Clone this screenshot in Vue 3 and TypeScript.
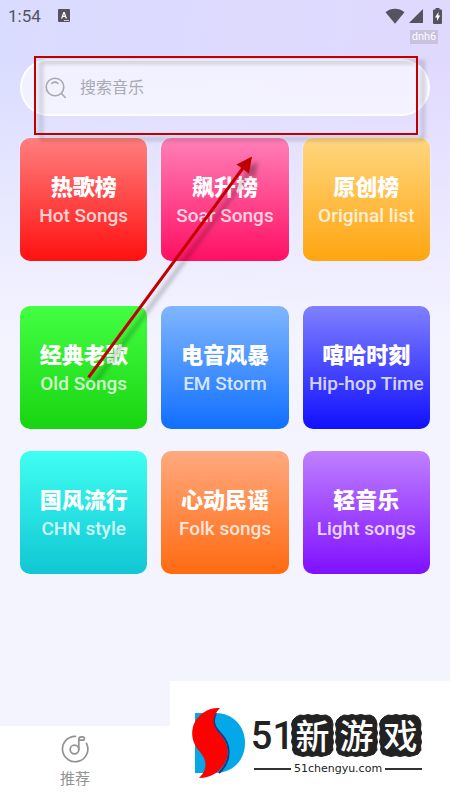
<script setup lang="ts">
import { ref } from 'vue'

interface Category {
  title: string
  subtitle: string
  tone: string
}

const keyword = ref('')

const charts: Category[] = [
  { title: '热歌榜', subtitle: 'Hot Songs', tone: 'red' },
  { title: '飙升榜', subtitle: 'Soar Songs', tone: 'pink' },
  { title: '原创榜', subtitle: 'Original list', tone: 'amber' },
]

const genres: Category[] = [
  { title: '经典老歌', subtitle: 'Old Songs', tone: 'green' },
  { title: '电音风暴', subtitle: 'EM Storm', tone: 'blue' },
  { title: '嘻哈时刻', subtitle: 'Hip-hop Time', tone: 'indigo' },
  { title: '国风流行', subtitle: 'CHN style', tone: 'cyan' },
  { title: '心动民谣', subtitle: 'Folk songs', tone: 'orange' },
  { title: '轻音乐', subtitle: 'Light songs', tone: 'purple' },
]

const sections: Category[][] = [charts, genres]
const brandTiles: string[] = ['新', '游', '戏']
</script>

<template>
  <div class="screen">
    <header class="status">
      <span class="clock">1:54</span>
      <svg class="notice" viewBox="0 0 12 13" aria-hidden="true">
        <rect width="12" height="13" rx="1" fill="#55535f" />
        <path d="M3 9.5 5.3 3h1.4L9 9.500H7.600L7.100 8H4.900L4.400 9.500ZM5.300 6.800h1.400L6 4.700Z" fill="#fff" fill-rule="evenodd" />
        <path d="M6 11.500h5" stroke="#c9c8dc" stroke-width="1" />
      </svg>
      <span class="indicators" aria-hidden="true">
        <svg width="20" height="16" viewBox="0 0 20 16">
          <path d="M.5 4.200C6-.3 14-.3 19.500 4.200L10 15.700Z" fill="#55535f" />
        </svg>
        <svg width="14" height="14" viewBox="0 0 14 14">
          <path d="M14 0V14H0Z" fill="#55535f" />
        </svg>
        <svg class="battery" width="9" height="16" viewBox="0 0 9 16">
          <path d="M2.500 0h4v1.500H8q1 0 1 1V15q0 1-1 1H1q-1 0-1-1V2.500q0-1 1-1h1.500Z" fill="#55535f" />
          <path d="M5.500 4 2 9.500h2V13l3.200-5.500H5.300Z" fill="#fff" />
        </svg>
      </span>
    </header>
    <div class="tagline"><span class="tag">dnh6</span></div>

    <main class="content">
      <form class="search" role="search" @submit.prevent>
        <label for="keyword" aria-label="搜索音乐">
          <svg width="22" height="22" viewBox="0 0 22 22" fill="none" stroke="#a8a7b3" stroke-width="1.600" stroke-linecap="round">
            <circle cx="10" cy="10" r="8.800" />
            <path d="M16.500 16.500 20.300 20.500M6.800 6.300Q9.800 3.800 13 6.300" />
          </svg>
        </label>
        <input id="keyword" v-model="keyword" type="text" placeholder="搜索音乐" />
      </form>

      <section v-for="(items, i) in sections" :key="i" class="grid">
        <a v-for="item in items" :key="item.title" href="#" class="card" :class="item.tone">
          <span class="title">{{ item.title }}</span>
          <span class="subtitle">{{ item.subtitle }}</span>
        </a>
      </section>
    </main>

    <nav class="tabs">
      <a href="#" class="tab">
        <svg width="28" height="28" viewBox="0 0 28 28" fill="none" stroke="#929292" stroke-width="1.700" stroke-linecap="round">
          <path d="M14.500 1.300A12.700 12.700 0 1 0 25.500 8.300" />
          <circle cx="13.500" cy="14.500" r="4.300" />
          <path d="M17.800 14.500V4.500Q17.800 1.800 20.500 1.800h1q2 0 2 1.700t-2 1.700h-3.700" />
        </svg>
        <span>推荐</span>
      </a>
    </nav>

    <aside class="brand">
      <svg class="mark" width="54" height="72" viewBox="0 0 54 72" aria-hidden="true">
        <path d="M3 6H23C41 6 53 19 53 36S41 66 23 66H3Z" fill="#04a8e8" />
        <path d="M24 6C20 14 22 20 29 27C39 37 40 54 27 66" fill="none" stroke="#07418e" stroke-width="2" />
        <path d="M28 1C18 0 6 6 1.500 18C-2 30 2 38 8 45C15 53 16 62 7 71C22 71 32 61 35 51C37 41 34 34 28 27C20 19 19 10 28 1Z" fill="#fe0000" />
      </svg>
      <div class="wordmark">
        <div class="name">
          <span class="number">51</span>
          <span v-for="tile in brandTiles" :key="tile" class="tile">
            <svg viewBox="0 0 43 43" aria-hidden="true">
              <path d="M5 3 9 1 13 1.500 17 .5 21 1.500 26 .5 30 1.500 35 1 39 3 41 6 42 10 41.500 15 42.500 19 41.500 23 42.500 28 41.500 32 42 36 39 40 35 41.500 30 42.500 26 41.500 21 42.500 17 41.500 12 42.500 8 41.500 3.500 40 1.500 36 2 32 .5 28 1.500 23 .5 19 1.500 15 .5 10 2 6Z" fill="#222" stroke="#222" stroke-width="1" stroke-linejoin="round" />
            </svg>
            <span class="glyph">{{ tile }}</span>
          </span>
        </div>
        <div class="site">51chengyu.com</div>
      </div>
    </aside>

    <svg class="markup" width="450" height="400" viewBox="0 0 450 400" aria-hidden="true">
      <g class="ink">
        <rect x="35" y="57" width="382" height="77" fill="none" stroke="#c00000" stroke-width="2" />
        <path d="M88.500 377.500 243 168" stroke="#c00000" stroke-width="3" />
        <path d="M252 156.500 236.500 164.500 249 173.500Z" fill="#c00000" />
      </g>
    </svg>
  </div>
</template>

<style>
body {
  margin: 0;
}
</style>

<style scoped>
.screen {
  position: relative;
  display: flex;
  flex-direction: column;
  min-height: 100vh;
  overflow: hidden;
  box-sizing: border-box;
  font-family: Roboto, "Noto Sans CJK SC", sans-serif;
  background:
    linear-gradient(180deg, rgba(244, 244, 255, 0) 60px, #f4f4ff 340px),
    linear-gradient(100deg, #dadcff 0%, #e2d8fe 100%);
}

.screen *,
.screen *::before,
.screen *::after {
  box-sizing: border-box;
}

.status {
  display: flex;
  align-items: center;
  height: 30px;
  padding: 1px 8px 0;
  color: #55535f;
}

.clock {
  font-size: 17px;
  line-height: 20px;
}

.notice {
  width: 12px;
  height: 13px;
  margin-left: 17px;
}

.indicators {
  display: flex;
  align-items: center;
  gap: 4px;
  margin-left: auto;
}

.battery {
  margin-left: 6px;
}

.tagline {
  display: flex;
  justify-content: flex-end;
  padding-right: 12px;
}

.tag {
  width: 28px;
  font-size: 11px;
  line-height: 14px;
  text-align: center;
  color: #fff;
  background: #c9c2df;
}

.content {
  flex: 1;
  padding: 15px 20px 24px;
}

.search {
  display: flex;
  align-items: center;
  gap: 13px;
  height: 57px;
  padding: 0 22px 0 23px;
  margin-bottom: 22px;
  border: 2px solid rgba(255, 255, 255, 0.8);
  border-radius: 29px;
  background: rgba(255, 255, 255, 0.6);
}

.search label {
  display: flex;
}

.search input {
  flex: 1;
  min-width: 0;
  padding: 0;
  border: 0;
  outline: 0;
  background: transparent;
  font: inherit;
  font-size: 16px;
  line-height: 24px;
  color: #55535f;
}

.search input::placeholder {
  color: #a9a8b4;
  opacity: 1;
}

.grid {
  display: grid;
  grid-template-columns: repeat(3, 1fr);
  gap: 22px 14px;
}

.grid + .grid {
  margin-top: 45px;
}

.card {
  display: flex;
  flex-direction: column;
  align-items: center;
  height: 123px;
  padding-top: 33px;
  border-radius: 10px;
  box-shadow: 0 0 2px rgba(255, 255, 255, 0.9);
  text-decoration: none;
  white-space: nowrap;
}

.title {
  font-family: "Noto Sans CJK SC", sans-serif;
  font-size: 22px;
  font-weight: 900;
  line-height: 28px;
  color: #fff;
}

.subtitle {
  font-size: 19px;
  font-weight: 500;
  line-height: 34px;
  color: rgba(255, 255, 255, 0.8);
}

.red { background: linear-gradient(#ff7f7f, #ff1010); }
.pink { background: linear-gradient(#ff80b8, #ff0f63); }
.amber { background: linear-gradient(#ffd780, #ffa510); }
.green { background: linear-gradient(#43ff43, #18d410); }
.blue { background: linear-gradient(#80b6ff, #106fff); }
.indigo { background: linear-gradient(#8080ff, #1010ff); }
.cyan { background: linear-gradient(#40fff2, #10c6d4); }
.orange { background: linear-gradient(#ffaa80, #ff6a10); }
.purple { background: linear-gradient(#bf80ff, #7f10ff); }

.tabs {
  display: grid;
  grid-template-columns: repeat(3, 1fr);
  height: 75px;
  background: #fff;
}

.tab {
  display: flex;
  flex-direction: column;
  align-items: center;
  gap: 6px;
  padding-top: 9px;
  font-size: 15px;
  line-height: 20px;
  color: #929292;
  text-decoration: none;
}

.brand {
  position: absolute;
  right: 0;
  bottom: 0;
  display: flex;
  width: 280px;
  height: 120px;
  padding: 26px 28px 0 22px;
  background: #fff;
  color: #222;
}

.mark {
  flex: none;
}

.wordmark {
  flex: 1;
  min-width: 0;
  padding-top: 7px;
}

.name {
  display: flex;
  justify-content: flex-end;
  gap: 1px;
  height: 43px;
}

.number {
  margin-right: -4px;
  font-family: Roboto, sans-serif;
  font-size: 38px;
  font-weight: 500;
  line-height: 45px;
}

.tile {
  position: relative;
  flex: none;
  width: 43px;
  height: 43px;
}

.tile svg {
  display: block;
}

.glyph {
  position: absolute;
  inset: 0;
  font-family: "Noto Sans CJK SC", sans-serif;
  font-size: 34px;
  font-weight: 500;
  line-height: 42px;
  text-align: center;
  color: #fff;
}

.site {
  display: flex;
  align-items: center;
  gap: 3px;
  margin-top: 4px;
  padding-left: 8px;
  font-family: "DejaVu Sans", sans-serif;
  font-size: 11px;
  line-height: 16px;
}

.site::before,
.site::after {
  content: "";
  flex: 1;
  height: 2px;
  background: #333;
}

.markup {
  position: absolute;
  top: 0;
  left: 0;
  pointer-events: none;
}

.ink {
  filter: drop-shadow(6px 5px 2px rgba(0, 0, 0, 0.3));
}
</style>
